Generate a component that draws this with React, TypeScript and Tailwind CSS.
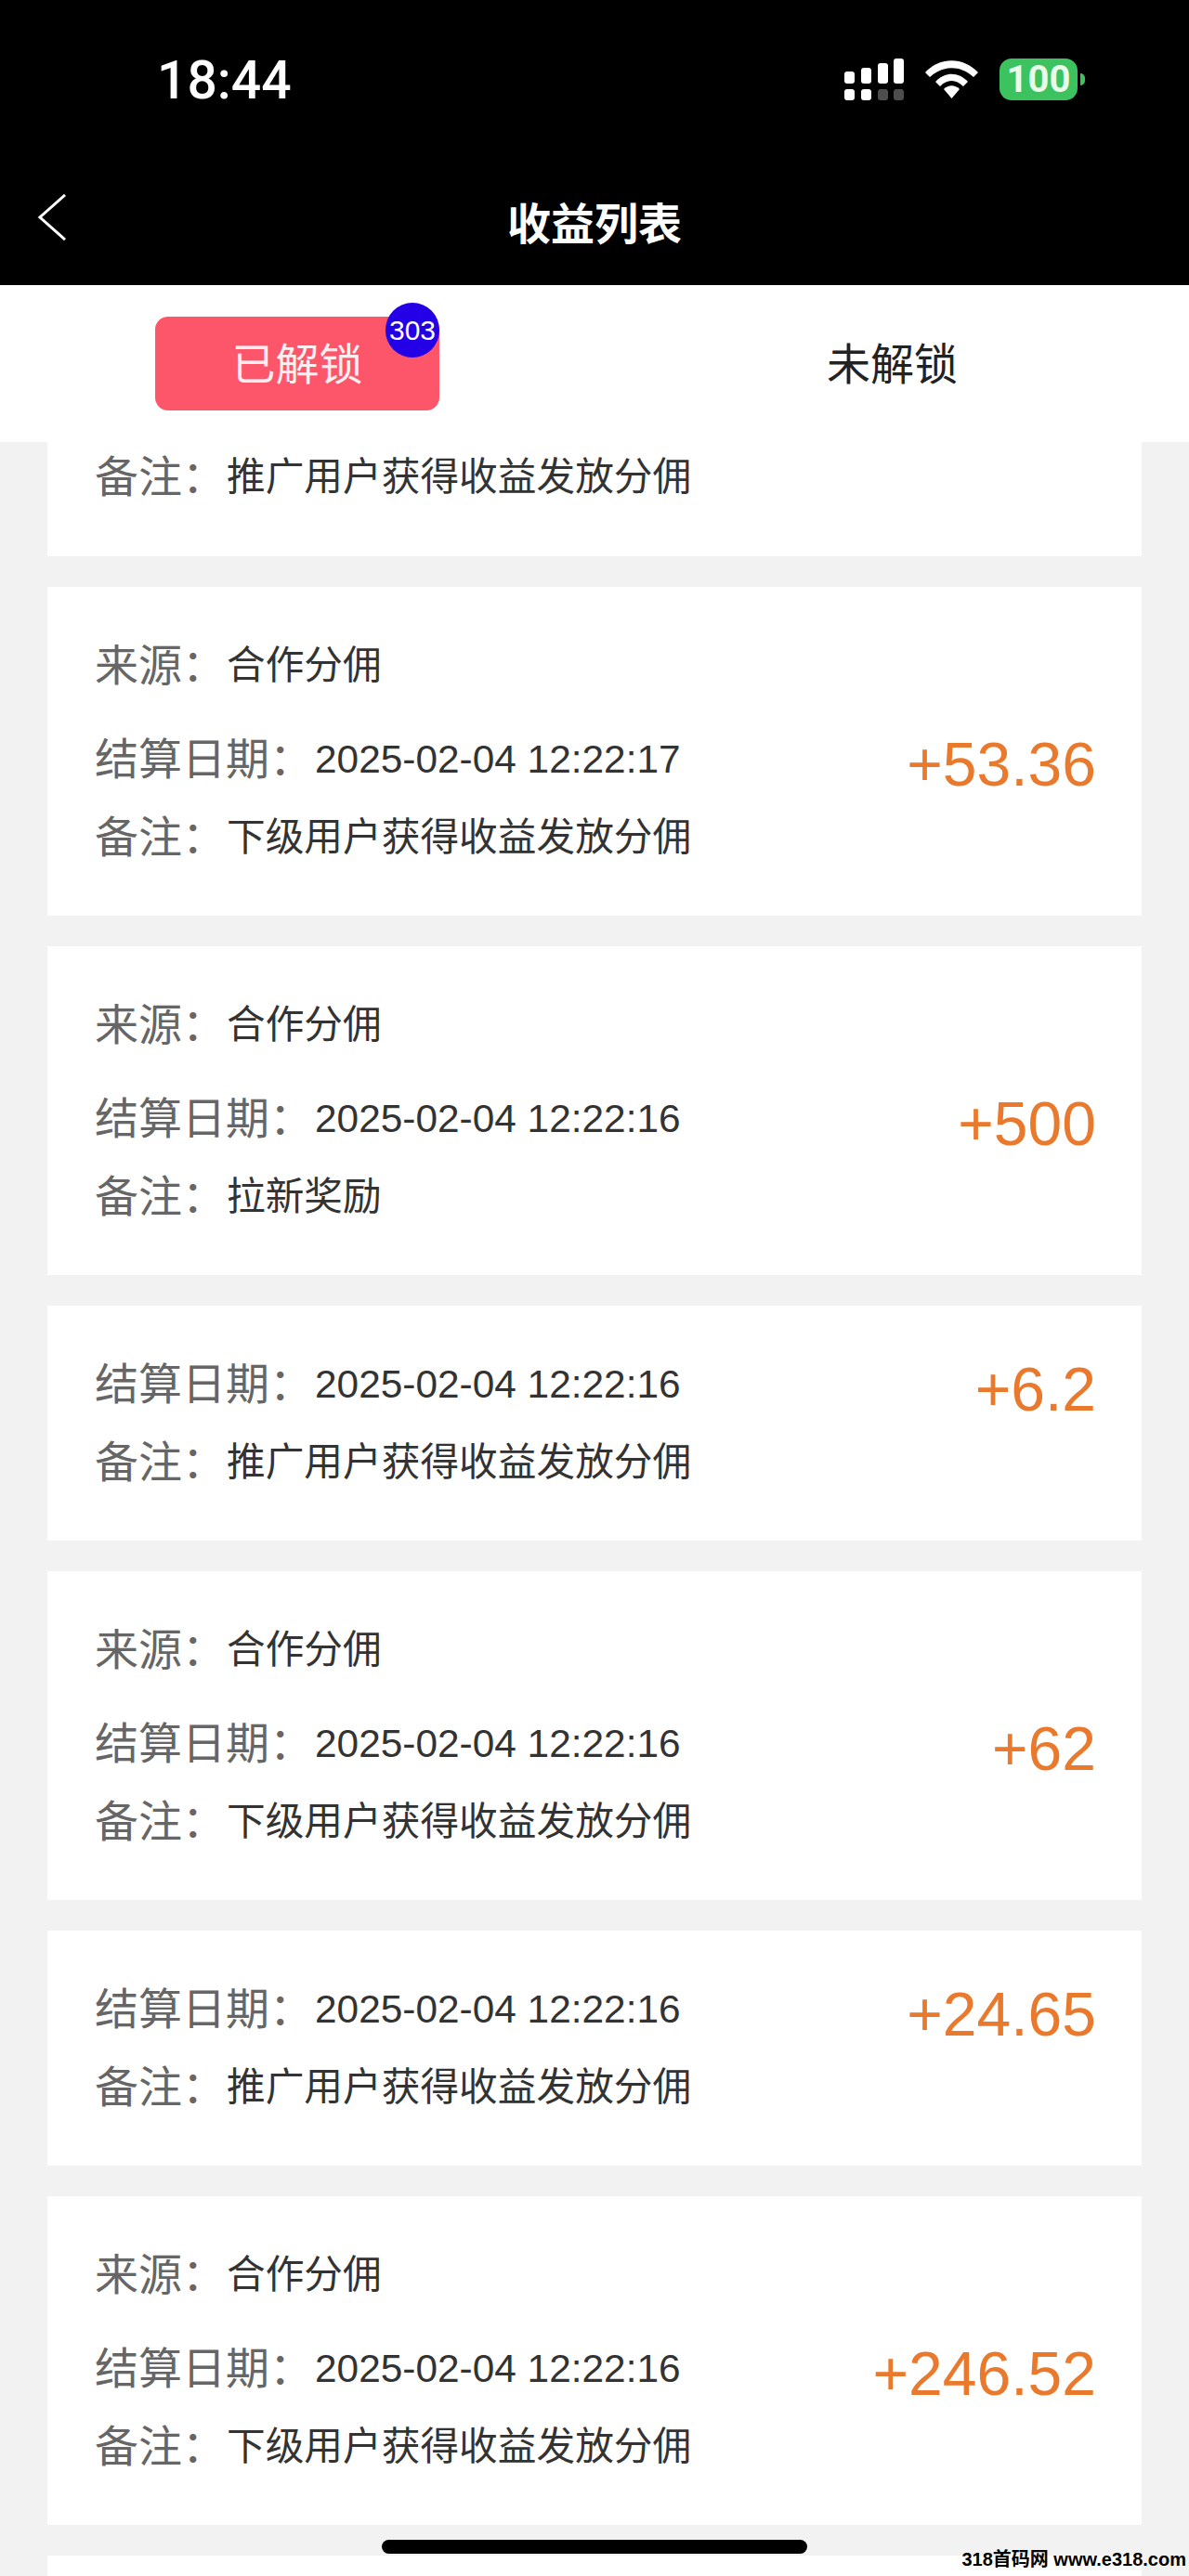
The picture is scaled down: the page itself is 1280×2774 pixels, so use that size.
import React from "react";

type T_Income = {
  source?: string;
  date: string;
  note: string;
  amount: string;
};

const items: T_Income[] = [
  { source: "合作分佣", date: "2025-02-04 12:22:17", note: "下级用户获得收益发放分佣", amount: "+53.36" },
  { source: "合作分佣", date: "2025-02-04 12:22:16", note: "拉新奖励", amount: "+500" },
  { date: "2025-02-04 12:22:16", note: "推广用户获得收益发放分佣", amount: "+6.2" },
  { source: "合作分佣", date: "2025-02-04 12:22:16", note: "下级用户获得收益发放分佣", amount: "+62" },
  { date: "2025-02-04 12:22:16", note: "推广用户获得收益发放分佣", amount: "+24.65" },
  { source: "合作分佣", date: "2025-02-04 12:22:16", note: "下级用户获得收益发放分佣", amount: "+246.52" },
];

const Signal = () => (
  <svg width="64" height="45" viewBox="0 0 64 45" fill="#fff">
    <rect x="0" y="14" width="11" height="13" rx="3" />
    <rect x="18" y="10" width="11" height="17" rx="3" />
    <rect x="36" y="5" width="11" height="22" rx="3" />
    <rect x="53" y="0" width="11" height="27" rx="3" />
    <rect x="0" y="33" width="11" height="12" rx="3" />
    <rect x="18" y="33" width="11" height="12" rx="3" />
    <rect x="36" y="33" width="11" height="12" rx="3" opacity="0.3" />
    <rect x="53" y="33" width="11" height="12" rx="3" opacity="0.3" />
  </svg>
);

const Wifi = () => (
  <svg width="57" height="41" viewBox="0 0 57 41" fill="#fff">
    <path d="M0 13 C16 -4 41 -4 57 13 L52 18 C38 5 19 5 5 18 Z" />
    <path d="M11 23 C21 12 36 12 46 23 L41 28 C33 20 24 20 16 28 Z" />
    <path d="M20 31 C25 26 32 26 37 31 L28.5 41 Z" />
  </svg>
);

const Row: React.FunctionComponent<{ label: string; value: string; wide?: boolean }> = ({
  label,
  value,
  wide,
}) => (
  <div className="flex h-[70px] items-center">
    <span className="text-[47px] leading-[70px] text-[#666]">{label}：</span>
    <span
      className={
        wide
          ? "ml-[2px] text-[42.4px] leading-[70px] text-[#333]"
          : "ml-[1px] text-[41.7px] leading-[70px] text-[#333]"
      }
    >
      {value}
    </span>
  </div>
);

const Card: React.FunctionComponent<{ data: T_Income }> = ({ data }) => (
  <div className="bg-white pb-[49px] pl-[51px] pr-[49px] pt-[50px]">
    {data.source && (
      <div className="mb-[31px]">
        <Row label="来源" value={data.source} />
      </div>
    )}
    <div className="flex items-start justify-between">
      <div className="flex flex-col gap-[14px]">
        <Row label="结算日期" value={data.date} wide />
        <Row label="备注" value={data.note} />
      </div>
      <span className="mt-[5px] text-[66px] leading-[70px] text-[#e9792c]">{data.amount}</span>
    </div>
  </div>
);

export default function App() {
  return (
    <div className="relative h-[2774px] w-[1280px] overflow-hidden bg-[#f2f2f2] font-['Liberation_Sans','Noto_Sans_CJK_SC',sans-serif]">
      <div className="h-[307px] bg-black px-[41px] pt-[63px] text-white">
        <div className="flex items-start justify-between pl-[128px] pr-[71px]">
          <span className="font-['Roboto',sans-serif] text-[57px] font-medium leading-[48px]">18:44</span>
          <div className="flex items-start">
            <Signal />
            <div className="ml-[23px] mt-[2px]">
              <Wifi />
            </div>
            <div className="ml-[23px] flex h-[45px] w-[84px] items-center justify-center rounded-[13px] bg-[#3cc25e] font-['Roboto',sans-serif] text-[40px] font-bold leading-none text-[#e9fbe9]">
              100
            </div>
            <div className="ml-[3px] mt-[16px] h-[13px] w-[5px] rounded-r-full bg-[#3cc25e]" />
          </div>
        </div>
        <div className="mt-[101px] grid grid-cols-[1fr_auto_1fr] items-start">
          <svg className="-mt-[3px]" width="30" height="50" viewBox="0 0 30 50" fill="none" stroke="#fff" strokeWidth="3">
            <path d="M29 1 L2 25 L29 49" />
          </svg>
          <span className="text-[47px] font-bold leading-[60px]">收益列表</span>
          <span />
        </div>
      </div>

      <div className="grid h-[169px] grid-cols-2 bg-white">
        <div className="pl-[167px] pt-[34px]">
          <div className="relative flex h-[101px] w-[306px] items-center justify-center rounded-[14px] bg-[#fd566b] pt-[3px] text-[47px] text-[#fdeef0]">
            已解锁
            <span className="absolute -top-[15px] right-0 flex h-[59px] w-[58px] items-center justify-center rounded-full bg-[#2300e6] text-[30px] text-white">
              303
            </span>
          </div>
        </div>
        <div className="flex items-center pl-[250px] pt-[3px] text-[47px] text-[#222]">未解锁</div>
      </div>

      <div className="flex flex-col gap-[33px] px-[51px]">
        <div className="bg-white pb-[50px] pl-[51px] pt-[3px]">
          <Row label="备注" value="推广用户获得收益发放分佣" />
        </div>
        {items.map((item, index) => (
          <Card key={index} data={item} />
        ))}
        <div className="h-[60px] bg-white" />
      </div>

      <div className="absolute bottom-[24px] left-[411px] h-[15px] w-[458px] rounded-full bg-black" />
      <div className="absolute bottom-[7px] right-[3px] text-[20px] font-bold leading-[22px] text-black">
        318首码网 www.e318.com
      </div>
    </div>
  );
}
